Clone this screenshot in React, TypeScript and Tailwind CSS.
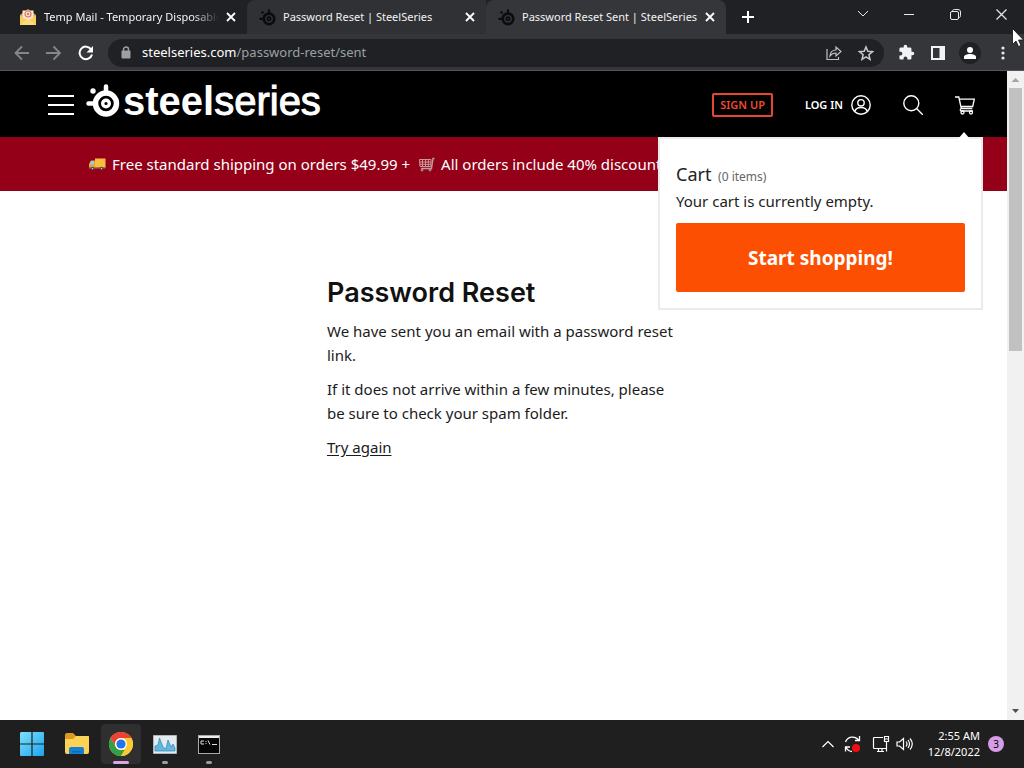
import React from 'react';

function SteelMark({ className }: { className: string }) {
  return (
    <svg viewBox="0 0 34 34" className={className} aria-hidden="true">
      <circle cx="20" cy="19.500" r="10.500" fill="none" stroke="currentColor" strokeWidth="5.500" />
      <circle cx="20" cy="19.500" r="3.300" fill="none" stroke="currentColor" strokeWidth="3.400" />
      <path d="M20 9V2.500M9 19.500H2.500" stroke="currentColor" strokeWidth="4.500" strokeLinecap="round" />
      <circle cx="7" cy="7" r="2.700" fill="currentColor" />
    </svg>
  );
}

function MailIcon() {
  return (
    <svg viewBox="0 0 18 18" className="h-[18px] w-[18px] shrink-0" aria-hidden="true">
      <path d="M1 7l8-6 8 6v10H1z" fill="#e0a63a" />
      <path d="M3.500 2.500h11V13h-11z" fill="#f6e9df" />
      <circle cx="9" cy="6" r="3" fill="none" stroke="#e5705c" strokeWidth="1.200" />
      <circle cx="9" cy="6" r="1.200" fill="#e5705c" />
      <path d="M1 7.500l8 5 8-5V17H1z" fill="#f8cf5f" />
      <path d="M1 17l8-6 8 6z" fill="#fbdc7c" />
    </svg>
  );
}

function Cross({ className }: { className: string }) {
  return (
    <svg viewBox="0 0 10 10" className={className} aria-hidden="true">
      <path d="M1 1l8 8M9 1l-8 8" stroke="currentColor" strokeWidth="1.800" />
    </svg>
  );
}

function Tab({ title, icon, tone, fade }: { title: string; icon: React.ReactNode; tone: string; fade?: boolean }) {
  return (
    <div className={`flex h-full min-w-0 items-center pr-2 ${tone}`}>
      {icon}
      <span className={`ml-[7px] min-w-0 flex-1 overflow-hidden whitespace-nowrap ${fade ? 'mask-r-from-85%' : ''}`}>{title}</span>
      <button aria-label={`Close ${title}`} className="ml-1 flex h-4 w-4 shrink-0 items-center justify-center text-white">
        <Cross className="h-[10px] w-[10px]" />
      </button>
    </div>
  );
}

function TitleBar() {
  return (
    <div className="flex h-[34px] items-start bg-[#202124] text-[11px] text-[#f1f3f4]">
      <div className="flex h-full min-w-0 flex-1">
        <Tab title="Temp Mail - Temporary Disposable Email" fade icon={<MailIcon />} tone="w-[247px] pl-[19px]" />
        <Tab title="Password Reset | SteelSeries" icon={<SteelMark className="h-[17px] w-[17px] shrink-0 text-[#0b0c0d]" />} tone="w-[239px] rounded-tl-lg bg-[#303134] pl-3" />
        <Tab title="Password Reset Sent | SteelSeries" icon={<SteelMark className="h-[17px] w-[17px] shrink-0 text-[#0b0c0d]" />} tone="w-[240px] rounded-t-lg bg-[#35363a] pl-3" />
        <button aria-label="New tab" className="flex w-11 items-center justify-center text-white">
          <svg viewBox="0 0 12 12" className="h-3 w-3" aria-hidden="true">
            <path d="M6 0v12M0 6h12" stroke="currentColor" strokeWidth="2" />
          </svg>
        </button>
      </div>
      <div className="flex h-7 shrink-0 text-[#e8eaed]">
        <button aria-label="Search tabs" className="flex w-[46px] items-center justify-center">
          <svg viewBox="0 0 12 8" className="h-2 w-3" aria-hidden="true"><path d="M1 1l5 5 5-5" fill="none" stroke="currentColor" /></svg>
        </button>
        <button aria-label="Minimize" className="flex w-[46px] items-center justify-center">
          <svg viewBox="0 0 10 10" className="h-[10px] w-[10px]" aria-hidden="true"><path d="M0 5.500h10" stroke="currentColor" /></svg>
        </button>
        <button aria-label="Restore" className="flex w-[46px] items-center justify-center">
          <svg viewBox="0 0 11 11" className="h-[11px] w-[11px]" fill="none" stroke="currentColor" aria-hidden="true">
            <rect x=".5" y="2.500" width="8" height="8" rx="1.500" />
            <path d="M2.500 2.500C2.500 1 3 .5 4.500.5H8c1.500 0 2.500 1 2.500 2.500v3.500c0 1.500-.5 2-2 2" />
          </svg>
        </button>
        <button aria-label="Close window" className="flex w-[46px] items-center justify-center">
          <svg viewBox="0 0 11 11" className="h-[11px] w-[11px]" aria-hidden="true"><path d="M.5.5l10 10M10.500.5l-10 10" stroke="currentColor" strokeWidth="1.200" /></svg>
        </button>
      </div>
    </div>
  );
}

function Toolbar() {
  return (
    <div className="flex h-[37px] items-center border-b border-[#55565a] bg-[#35363a] pt-px text-[#e8eaed]">
      <button aria-label="Back" className="ml-[14px] text-[#85868a]">
        <svg viewBox="0 0 16 16" className="h-4 w-4" fill="none" stroke="currentColor" strokeWidth="1.800" aria-hidden="true"><path d="M15 8H2M8 1.500L1.500 8 8 14.500" /></svg>
      </button>
      <button aria-label="Forward" className="ml-4 text-[#85868a]">
        <svg viewBox="0 0 16 16" className="h-4 w-4" fill="none" stroke="currentColor" strokeWidth="1.800" aria-hidden="true"><path d="M0 8h13M7.500 1.500L14 8l-6.500 6.500" /></svg>
      </button>
      <button aria-label="Reload" className="ml-4 text-white">
        <svg viewBox="0 0 16 16" className="h-4 w-4" aria-hidden="true">
          <path d="M13.200 4.500A6.300 6.300 0 1 0 14 9.500" fill="none" stroke="currentColor" strokeWidth="2" />
          <path d="M15 1v6.500H8.500z" fill="currentColor" />
        </svg>
      </button>
      <div className="ml-[14px] flex h-7 min-w-0 flex-1 items-center rounded-full bg-[#202124] pr-[10px] pl-[13px]">
        <svg viewBox="0 0 10 13" className="h-[13px] w-[10px] shrink-0 text-[#9aa0a6]" aria-hidden="true">
          <path d="M2.500 6V3.500a2.500 2.500 0 0 1 5 0V6" fill="none" stroke="currentColor" strokeWidth="1.500" />
          <rect x=".5" y="4.500" width="9" height="8" rx="1" fill="currentColor" />
        </svg>
        <span className="ml-[11px] flex-1 truncate text-[13px] text-[#9aa0a6]"><span className="text-white">steelseries.com</span>/password-reset/sent</span>
        <button aria-label="Share" className="text-[#bdc1c6]">
          <svg viewBox="0 0 16 16" className="h-4 w-4" fill="none" stroke="currentColor" strokeWidth="1.200" aria-hidden="true">
            <path d="M1 4v10.500h11.500V12" />
            <path d="M4 11c.3-4 2.500-6 6-6V2l5 4.500-5 4.500V8C7.500 8 5.500 8.800 4 11z" />
          </svg>
        </button>
        <button aria-label="Bookmark" className="ml-4 text-[#c6c9cd]">
          <svg viewBox="0 0 16 16" className="h-4 w-4" fill="none" stroke="currentColor" strokeWidth="1.500" aria-hidden="true">
            <path d="M8 2l1.800 4.300 4.700.4-3.600 3 1.100 4.600L8 11.800l-4 2.500 1.100-4.600-3.600-3 4.700-.4z" />
          </svg>
        </button>
      </div>
      <button aria-label="Extensions" className="ml-[14px] text-[#f1f3f4]">
        <svg viewBox="0 0 24 24" className="h-[17px] w-[17px]" fill="currentColor" aria-hidden="true">
          <path d="M20.500 11H19V7a2 2 0 0 0-2-2h-4V3.500a2.500 2.500 0 0 0-5 0V5H4a2 2 0 0 0-2 2v3.800h1.500a2.700 2.700 0 0 1 0 5.400H2V20a2 2 0 0 0 2 2h3.800v-1.500a2.700 2.700 0 0 1 5.400 0V22H17a2 2 0 0 0 2-2v-4h1.500a2.500 2.500 0 0 0 0-5z" />
        </svg>
      </button>
      <button aria-label="Side panel" className="ml-4 text-[#f1f3f4]">
        <svg viewBox="0 0 14 14" className="h-[14px] w-[14px]" aria-hidden="true"><path d="M1 1h12v12H1z" fill="none" stroke="currentColor" strokeWidth="2" /><path d="M8.500 1H13v12H8.500z" fill="currentColor" /></svg>
      </button>
      <button aria-label="Profile" className="ml-[14px] flex h-[22px] w-[22px] items-center justify-center rounded-full bg-[#202124] text-white">
        <svg viewBox="0 0 12 12" className="h-3 w-3" fill="currentColor" aria-hidden="true"><circle cx="6" cy="3" r="3" /><path d="M0 12v-2c0-2 3-3 6-3s6 1 6 3v2z" /></svg>
      </button>
      <button aria-label="Menu" className="mr-[19px] ml-5 text-[#e8eaed]">
        <svg viewBox="0 0 4 14" className="h-[14px] w-1" fill="currentColor" aria-hidden="true"><circle cx="2" cy="2" r="1.600" /><circle cx="2" cy="7" r="1.600" /><circle cx="2" cy="12" r="1.600" /></svg>
      </button>
    </div>
  );
}

function CartPopup() {
  return (
    <section aria-label="Cart" className="absolute top-full right-6 w-[325px] border-2 border-[#ebebeb] bg-white px-4 pt-[23px] pb-4 text-[#222]">
      <svg viewBox="0 0 12 7" className="absolute right-[11px] bottom-full h-[7px] w-3" aria-hidden="true"><path d="M0 7l6-7 6 7z" fill="#fff" /></svg>
      <h2 className="text-[18px] leading-[25px]">Cart <span className="ml-0.5 text-[12px] text-[#666]">(0 items)</span></h2>
      <p className="text-[15px] leading-6">Your cart is currently empty.</p>
      <button className="mt-[10px] h-[69px] w-full rounded-xs bg-[#fc4f02] pt-0.5 text-[19px] font-bold text-white">Start shopping!</button>
    </section>
  );
}

function SiteHeader() {
  return (
    <header className="relative z-10 flex h-[66px] items-center bg-black pt-0.5 pr-8 pl-12 text-white">
      <button aria-label="Open menu">
        <svg viewBox="0 0 26 22" className="h-[22px] w-[26px]" aria-hidden="true"><path d="M0 2h26M0 11h26M0 20h26" stroke="currentColor" strokeWidth="2" /></svg>
      </button>
      <a href="#home" aria-label="SteelSeries" className="ml-3 flex items-center pb-2 font-['Liberation_Sans',sans-serif] text-[40px] leading-[46px]">
        <SteelMark className="mr-[3px] h-[34px] w-[34px]" />
        <span className="font-bold">steel</span><span className="[-webkit-text-stroke:1px_white]">series</span>
      </a>
      <nav className="ml-auto flex items-center text-[11px] font-semibold">
        <a href="#signup" className="flex h-6 items-center rounded-xs border-2 border-[#e8472f] px-1.5 text-[#f04a30]">SIGN UP</a>
        <a href="#login" className="ml-8 flex items-center gap-2">
          LOG IN
          <svg viewBox="0 0 20 20" className="h-5 w-5" fill="none" stroke="currentColor" strokeWidth="1.400" aria-hidden="true">
            <circle cx="10" cy="10" r="9.200" /><circle cx="10" cy="7.800" r="3.200" /><path d="M3.800 16.500c.8-3 3.200-4 6.200-4s5.400 1 6.200 4" />
          </svg>
        </a>
        <button aria-label="Search" className="ml-8">
          <svg viewBox="0 0 20 20" className="h-5 w-5" fill="none" stroke="currentColor" strokeWidth="1.400" aria-hidden="true"><circle cx="8.300" cy="8.300" r="7.500" /><path d="M13.800 13.800L19.800 19.800" /></svg>
        </button>
        <button aria-label="Cart" className="ml-8">
          <svg viewBox="0 0 20 20" className="h-5 w-5" fill="none" stroke="currentColor" strokeWidth="1.300" aria-hidden="true">
            <path d="M0 2h3.800l2.500 11.500h11M4.300 4.200h15l-1.600 7.300H6M6.300 13.500c-1.300.5-1.500 2.500.2 2.500h11.500" /><circle cx="7.500" cy="17.500" r="1.500" /><circle cx="16" cy="17.500" r="1.500" />
          </svg>
        </button>
      </nav>
      <CartPopup />
    </header>
  );
}

function Truck() {
  return (
    <svg viewBox="0 0 18 14" className="h-[14px] w-[18px] shrink-0" aria-hidden="true">
      <path d="M7 1.500h10.500V11H7z" fill="#fbbd3c" /><path d="M1.500 6l1.500-2.500h4V11H1V7z" fill="#e9a42c" /><path d="M2 7l1.500-3H6v3.500H2z" fill="#8fd0ea" />
      <path d="M1 10h16v1.500H1z" fill="#a8715c" /><circle cx="4.500" cy="11.500" r="1.800" fill="#54474a" /><circle cx="13.500" cy="11.500" r="1.800" fill="#54474a" /><circle cx="4.500" cy="11.500" r=".7" fill="#ccc" /><circle cx="13.500" cy="11.500" r=".7" fill="#ccc" />
    </svg>
  );
}

function Trolley() {
  return (
    <svg viewBox="0 0 17 15" className="h-[15px] w-[17px] shrink-0" fill="none" stroke="#c99a98" aria-hidden="true">
      <path d="M1.500 2.500h11.500v7h-11zM1.500 5h11.500M1.500 7.300h11.500M4.500 2.500v7M7.500 2.500v7M10.300 2.500v7" />
      <path d="M16.500 1.500h-1.500l-1.500 10H3" stroke="#b8a0a0" strokeWidth="1.400" /><circle cx="4" cy="13" r="1" fill="#4b3436" /><circle cx="12" cy="13" r="1" fill="#4b3436" />
    </svg>
  );
}

function Scrollbar() {
  return (
    <div className="flex w-[17px] shrink-0 flex-col items-center bg-[#f1f1f1]" aria-hidden="true">
      <svg viewBox="0 0 17 17" className="h-[17px] w-[17px] shrink-0"><path d="M4.500 11l4-4 4 4z" fill="#a3a3a3" /></svg>
      <div className="h-[263px] w-[13px] bg-[#c1c1c1]" />
      <svg viewBox="0 0 17 17" className="mt-auto h-[17px] w-[17px] shrink-0"><path d="M5 6l3.500 4L12 6z" fill="#505050" /></svg>
    </div>
  );
}

function Taskbar() {
  return (
    <footer className="flex h-12 items-center bg-[#1f1f1f] text-white">
      <div className="flex items-center pl-3">
        <button aria-label="Start" className="flex h-10 w-10 items-center justify-center">
          <svg viewBox="0 0 24 24" className="h-6 w-6" aria-hidden="true">
            <defs><linearGradient id="win" x1="0" y1="0" x2="1" y2="1"><stop stopColor="#7fe0fb" /><stop offset="1" stopColor="#1ba4ee" /></linearGradient></defs>
            <path d="M0 1.500Q0 0 1 0h10.400v11.400H0zM12.600 0H23q1 0 1 1v10.400H12.600zM0 12.600h11.400V24H1q-1 0-1-1zM12.600 12.600H24V23q0 1-1 1H12.600z" fill="url(#win)" />
          </svg>
        </button>
        <button aria-label="File Explorer" className="ml-[5px] flex h-10 w-10 items-center justify-center">
          <svg viewBox="0 0 26 24" className="h-6 w-[26px]" aria-hidden="true">
            <path d="M1 3q0-2 2-2h6l3 3h12q1 0 1 1v4H1z" fill="#dc9a1f" /><path d="M1 7h8l3-3h12q1 0 1 1v15q0 2-2 2H3q-2 0-2-2z" fill="#fcd356" />
            <path d="M5 22v-5q0-2 2-2h11q2 0 2 2v5z" fill="#1681d4" /><path d="M8 19h9v1.500H8z" fill="#0b6abb" />
          </svg>
        </button>
        <button aria-label="Chrome" className="relative ml-1 flex h-10 w-10 items-center justify-center rounded bg-[#2f2f2f]">
          <svg viewBox="0 0 24 24" className="h-6 w-6" aria-hidden="true">
            <circle cx="12" cy="12" r="12" fill="#fcc934" />
            <path d="M1.600 6A12 12 0 0 1 22.400 6H12a6 6 0 0 0-5.200 9z" fill="#ea4335" />
            <path d="M1.600 6L6.800 15A6 6 0 0 0 12 18h5.200L12 24A12 12 0 0 1 1.600 6z" fill="#34a046" />
            <path d="M17.200 15L12 24A12 12 0 0 0 22.400 6H12z" fill="#fcc934" />
            <circle cx="12" cy="12" r="6" fill="#fff" /><circle cx="12" cy="12" r="4.600" fill="#2374e8" />
          </svg>
          <span className="absolute bottom-0 left-3 h-[3px] w-4 rounded-full bg-[#dca5e4]" />
        </button>
        <button aria-label="Process Monitor" className="relative ml-1 flex h-10 w-10 items-center justify-center">
          <svg viewBox="0 0 24 19" className="h-[19px] w-6" aria-hidden="true">
            <path d="M.5.5h23v18H.5z" fill="#e3eaf0" stroke="#aeb6bd" /><path d="M2 16v-5l3-1 1.500-7 3.500 9 3 2 2-9 3 7 2-3 2 4v3z" fill="#65b7dc" stroke="#2587ba" strokeWidth=".7" />
          </svg>
          <span className="absolute bottom-0 left-[17px] h-[3px] w-1.5 rounded-full bg-[#9d9d9d]" />
        </button>
        <button aria-label="Command Prompt" className="relative ml-1 flex h-10 w-10 items-center justify-center">
          <svg viewBox="0 0 22 19" className="h-[19px] w-[22px]" aria-hidden="true">
            <path d="M0 0h22v19H0z" fill="#aaa" /><path d="M1 3h20v15H1z" fill="#050505" /><path d="M1 1h20v2H1z" fill="#ececec" />
            <path d="M6 6H3v3h3M8 6v1M8 8v1M10 5.500l2 4M14 9.500h5" fill="none" stroke="#ddd" />
          </svg>
          <span className="absolute bottom-0 left-[17px] h-[3px] w-1.5 rounded-full bg-[#9d9d9d]" />
        </button>
      </div>
      <div className="ml-auto flex items-center pr-5">
        <svg viewBox="0 0 12 8" className="h-2 w-3" fill="none" stroke="currentColor" strokeWidth="1.200" aria-hidden="true"><path d="M.5 7L6 1.500 11.500 7" /></svg>
        <svg viewBox="0 0 18 18" className="ml-2.5 h-[18px] w-[18px]" fill="none" stroke="currentColor" strokeWidth="1.300" aria-hidden="true">
          <path d="M1.500 7a7.500 7.500 0 0 1 13-2M15.500 1v4.500H11M1.500 16.500V12H6M2 12.500c1.500 2.500 3.500 4 6 4" /><circle cx="12" cy="13" r="4" fill="#f30b16" stroke="none" />
        </svg>
        <svg viewBox="0 0 18 18" className="ml-2.5 h-[18px] w-[18px]" fill="none" stroke="currentColor" strokeWidth="1.200" aria-hidden="true">
          <path d="M11 2.500H2.500Q1.500 2.500 1.500 3.500v9q0 1 1 1H14M5 16.500h7M6.500 13.500v3M10 13.500v3M12.500 1.500h4v5h-4zM14.500 6.500v10M12.500 4h4" />
        </svg>
        <svg viewBox="0 0 18 16" className="ml-1.5 h-4 w-[18px]" fill="none" stroke="currentColor" strokeWidth="1.200" aria-hidden="true">
          <path d="M1 6h2.500L7.500 2.500v11L3.500 10H1zM10 5.500q2 2.500 0 5M12 4q3 4 0 8M14 2.500q4.500 5.500 0 11" />
        </svg>
        <div className="ml-[14px] text-right text-[11px] leading-4"><div>2:55 AM</div><div>12/8/2022</div></div>
        <span className="ml-2 flex h-4 w-4 items-center justify-center rounded-full bg-[#d79ce6] text-[10px] text-black">3</span>
      </div>
    </footer>
  );
}

export default function App() {
  return (
    <div className="relative flex min-h-screen flex-col overflow-hidden bg-white font-['Noto_Sans','Open_Sans',sans-serif]">
      <TitleBar />
      <Toolbar />
      <div className="flex flex-1">
        <div className="min-w-0 flex-1">
          <SiteHeader />
          <div className="flex h-[54px] items-center overflow-hidden bg-[#930017] pl-[88px] text-[15px] whitespace-nowrap text-white">
            <Truck />
            <span className="mr-2 ml-1.5">Free standard shipping on orders $49.99 +</span>
            <Trolley />
            <span className="ml-1.5">All orders include 40% discount</span>
          </div>
          <main className="mx-auto w-[353px] pt-[84px] text-[15px] leading-6 text-[#1b1b1b]">
            <h1 className="font-['Inter',sans-serif] text-[27px] leading-9 font-semibold text-[#111]">Password Reset</h1>
            <p className="mt-2">We have sent you an email with a password reset link.</p>
            <p className="mt-2.5">If it does not arrive within a few minutes, please be sure to check your spam folder.</p>
            <a href="#retry" className="mt-2.5 inline-block underline underline-offset-2">Try again</a>
          </main>
        </div>
        <Scrollbar />
      </div>
      <Taskbar />
      <svg viewBox="0 0 12 19" className="absolute top-7 right-0 h-[19px] w-3" aria-hidden="true"><path d="M.5.5v16l3.500-3.500 2.500 5.500 2.500-1-2.500-5.500h5z" fill="#fff" stroke="#111" strokeWidth=".8" /></svg>
    </div>
  );
}
